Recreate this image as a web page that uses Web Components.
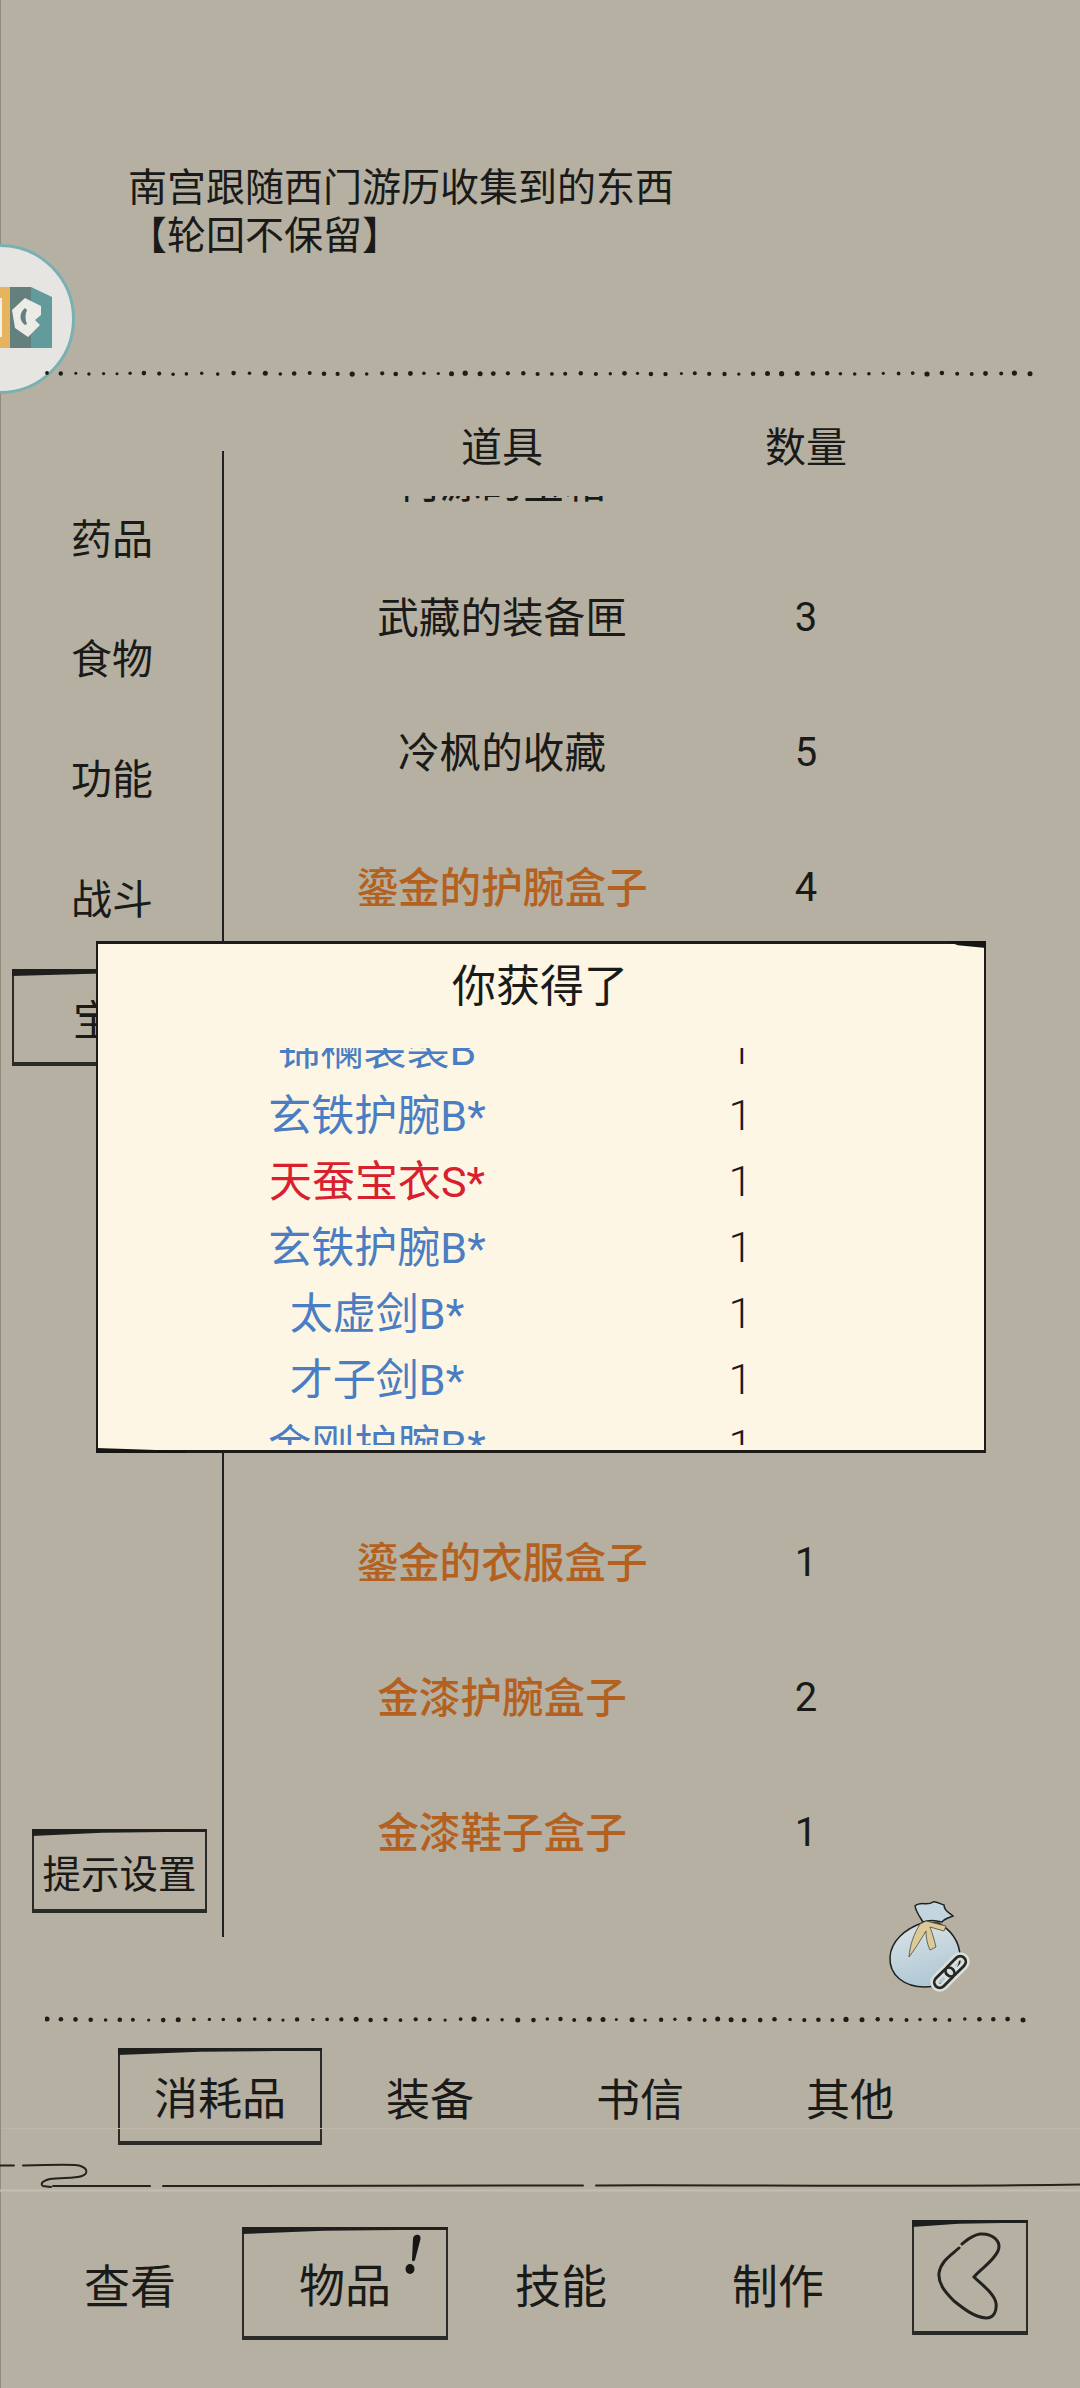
<!DOCTYPE html>
<html lang="zh">
<head>
<meta charset="utf-8">
<style>
html, body { margin: 0; padding: 0; }
body {
    width: 1080px;
    height: 2388px;
    overflow: hidden;
    background: #b5b0a1;
    color: #1a1a18;
    font-family: Roboto, "Noto Sans CJK SC", "Noto Sans", sans-serif;
}
</style>
</head>
<body>
<game-page>
    <intro-text>南宫跟随西门游历收集到的东西<br>【轮回不保留】</intro-text>
    <dot-rule seed="3"></dot-rule>
    <bag-panel></bag-panel>
    <dot-rule seed="7"></dot-rule>
    <tab-bar>
        <ink-box active>消耗品</ink-box>
        <ink-box>装备</ink-box>
        <ink-box>书信</ink-box>
        <ink-box>其他</ink-box>
    </tab-bar>
    <ink-rule></ink-rule>
    <main-nav></main-nav>
</game-page>
<float-badge></float-badge>
<reward-dialog></reward-dialog>

<script>
class GamePage extends HTMLElement {
    constructor() {
        super();
        this.attachShadow({mode: "open"});
        this.shadowRoot.innerHTML = `
<style>
:host { display: flex; flex-direction: column; width: 1080px; height: 2388px; border-left: 1px solid #8f8b7f; box-sizing: border-box; }
</style>
<slot></slot>`;
    }
}

class IntroText extends HTMLElement {
    constructor() {
        super();
        this.attachShadow({mode: "open"});
        this.shadowRoot.innerHTML = `
<style>
:host { display: block; height: 369px; box-sizing: border-box; padding: 164px 0 0 127px; font-size: 39px; line-height: 48px; }
</style>
<slot></slot>`;
    }
}

class DotRule extends HTMLElement {
    constructor() {
        super();
        this.attachShadow({mode: "open"});
        let seed = Number(this.getAttribute("seed")) || 1;
        let rand = () => {
            seed = (seed * 16807) % 2147483647;
            return seed / 2147483647;
        };
        let dots = "";
        for (let x = 2; x < 990; x += 13 + rand() * 3) {
            dots += `<circle cx="${x.toFixed(1)}" cy="${(4 + rand() * 1.2).toFixed(1)}" r="${(1.5 + rand() * 1.1).toFixed(1)}"/>`;
        }
        this.shadowRoot.innerHTML = `
<style>
:host { display: block; height: 8px; padding-left: 44px; position: relative; z-index: 1; }
svg { display: block; }
</style>
<svg width="992" height="8" fill="#1c1c1a">${dots}</svg>`;
    }
}

class BagPanel extends HTMLElement {
    constructor() {
        super();
        this.attachShadow({mode: "open"});
        let sideRows = ["药品", "食物", "功能", "战斗"].map(t => `<div class="side">${t}</div>`).join("");
        this.shadowRoot.innerHTML = `
<style>
:host { display: grid; grid-template-columns: 221px 2px 1fr; height: 1638px; position: relative; }
.left { display: flex; flex-direction: column; padding-top: 103px; }
.side { height: 120px; line-height: 120px; padding-left: 70px; font-size: 41px; flex: none; }
.current { margin: 10px 0 0 11px; width: 290px; height: 96px; justify-content: flex-start; padding-left: 59px; font-size: 41px; }
.tip { margin: auto 0 102px 31px; width: 175px; height: 83px; font-size: 38.5px; }
.line { background: #20201e; margin-top: 74px; height: 1486px; }
.right { display: flex; flex-direction: column; padding-top: 37px; }
.head, .row { display: grid; grid-template-columns: 518px 90px; margin-left: 19px; align-items: center; justify-items: center; }
.head { height: 50px; font-size: 41px; flex: none; }
.window { height: 1400px; overflow: hidden; margin-top: 32px; flex: none; }
.rows { margin-top: -84px; }
.row { height: 135px; font-size: 41.6px; }
.num { font-size: 40px; padding-top: 6px; }
.gold { color: #b4611f; font-weight: 500; }
svg.bag { position: absolute; left: 859px; top: 1502px; }
</style>
<div class="left">
    ${sideRows}
    <ink-box class="current" active>宝箱</ink-box>
    <ink-box class="tip" active>提示设置</ink-box>
</div>
<div class="line"></div>
<div class="right">
    <div class="head"><span>道具</span><span>数量</span></div>
    <div class="window"><div class="rows">
        <div class="row"><span>何源的宝箱</span><span class="num">5</span></div>
        <div class="row"><span>武藏的装备匣</span><span class="num">3</span></div>
        <div class="row"><span>冷枫的收藏</span><span class="num">5</span></div>
        <div class="row"><span class="gold">鎏金的护腕盒子</span><span class="num">4</span></div>
        <div class="row"></div><div class="row"></div><div class="row"></div><div class="row"></div>
        <div class="row"><span class="gold">鎏金的衣服盒子</span><span class="num">1</span></div>
        <div class="row"><span class="gold">金漆护腕盒子</span><span class="num">2</span></div>
        <div class="row"><span class="gold">金漆鞋子盒子</span><span class="num">1</span></div>
    </div></div>
</div>
<svg class="bag" width="120" height="120" viewBox="0 0 120 120">
    <defs><linearGradient id="g" x1="0.3" y1="0" x2="0.6" y2="1"><stop offset="0" stop-color="#d9e2e5"/><stop offset="1" stop-color="#adc6d4"/></linearGradient></defs>
    <path d="M62 44C45 50 31 62 30 78c-1 18 14 30 35 30 20 0 35-13 35-30 0-16-10-28-22-34z" fill="url(#g)" stroke="#1f2222" stroke-width="1.500"/>
    <path d="M63 43c-3-5-7-10-8-16 5-5 13 0 18-4 3-1 7 2 11 3 0 5 4 7 9 11-5 2-9 3-11 6-7-2-14-2-19 0z" fill="#c3d6df" stroke="#1f2222" stroke-width="1.500"/>
    <path d="M60 45C54 55 50 65 49 78c6-8 11-16 17-26 0 8 2 15 4 19l6-3c-2-8-4-15-6-20l14 4 2-5-20-5z" fill="#dccb98" stroke="#4a473a" stroke-width=".8"/>
    <g fill="none" transform="rotate(-45 90 93)">
        <rect x="70" y="87.500" width="24" height="11" rx="5.500" stroke="#dedfd8" stroke-width="8"/>
        <rect x="86" y="87.500" width="24" height="11" rx="5.500" stroke="#dedfd8" stroke-width="8"/>
        <rect x="70" y="87.500" width="24" height="11" rx="5.500" stroke="#23282a" stroke-width="2.800"/>
        <rect x="86" y="87.500" width="24" height="11" rx="5.500" stroke="#23282a" stroke-width="2.800"/>
    </g>
</svg>`;
    }
}

class InkBox extends HTMLElement {
    constructor() {
        super();
        this.attachShadow({mode: "open"});
        this.shadowRoot.innerHTML = `
<style>
:host { display: flex; align-items: center; justify-content: center; box-sizing: border-box; position: relative; }
:host([active]) { border: 2px solid #2a2a27; border-bottom-width: 4px; }
:host([active])::before {
    content: "";
    position: absolute;
    left: -2px;
    right: -2px;
    top: -3px;
    height: 7px;
    background: #1e1e1c;
    clip-path: polygon(0 0, 100% 0, 100% 35%, 40% 55%, 0 100%);
}
</style>
<slot></slot>`;
    }
}

class TabBar extends HTMLElement {
    constructor() {
        super();
        this.attachShadow({mode: "open"});
        this.shadowRoot.innerHTML = `
<style>
:host { display: grid; grid-template-columns: 207px repeat(3, 210px); height: 96px; margin-top: 26px; padding-left: 117px; font-size: 44px; position: relative; }
::slotted(ink-box) { height: 96px; }
::slotted(ink-box[active]) { margin-right: 3px; }
.fade { position: absolute; left: 0; right: 0; top: 79px; height: 1px; background: #bdb8aa; }
</style>
<slot></slot>
<div class="fade"></div>`;
    }
}

class InkRule extends HTMLElement {
    constructor() {
        super();
        this.attachShadow({mode: "open"});
        this.shadowRoot.innerHTML = `
<style>
:host { display: block; height: 32px; margin-top: 15px; }
svg { display: block; margin-left: -1px; }
</style>
<svg width="1081" height="32" fill="none" stroke="#22221f" stroke-linecap="round">
    <path d="M0 5.500h14" stroke-width="1.800"/>
    <path d="M23 5.500c18-.5 40-1 52-.5 12 1 15 8 7 11-8 3-22 1-32 3-8 2-10 5-7 7l8 1" stroke-width="2"/>
    <path d="M53 26h97M163 26c60 1 130 1 420-.5M596 25.500c100-1 300 2 484-1" stroke-width="2"/>
    <path d="M0 30.500h1081" stroke="#c2beb2" stroke-width="2"/>
</svg>`;
    }
}

class MainNav extends HTMLElement {
    constructor() {
        super();
        this.attachShadow({mode: "open"});
        this.shadowRoot.innerHTML = `
<style>
:host { display: flex; align-items: flex-start; padding: 36px 0 0 23px; font-size: 46px; position: relative; }
.item { width: 216px; height: 110px; flex: none; display: flex; align-items: center; justify-content: center; }
.item.first { width: 212px; }
.item.last { width: 218px; }
.box { width: 206px; height: 112px; margin: 0 5px 0 6px; padding-bottom: 2px; flex: none; }
.back { width: 116px; height: 114px; margin: -7px 0 0 25px; flex: none; }
.back svg { display: block; }
.alert { position: absolute; left: 400px; top: 42px; }
</style>
<div class="item first">查看</div>
<ink-box class="box" active>物品</ink-box>
<div class="item">技能</div>
<div class="item last">制作</div>
<ink-box class="back" active>
    <svg width="112" height="108" viewBox="0 0 112 108" fill="none" stroke="#22221f" stroke-width="3" stroke-linecap="round">
        <path d="M45 25C36 33 27 38 25 50c-1 10 5 18 15 28 10 8 20 16 32 17 8 0 11-7 10-15-2-10-14-18-22-26 6-8 18-14 24-26 4-10-6-18-18-17-8 1-13 6-18 10"/>
    </svg>
</ink-box>
<svg class="alert" width="26" height="42" viewBox="0 0 26 42" fill="#161614">
    <path d="M15 1c3-1 5 1 4.500 4L14 26c-.5 1.500-3 1.500-3 0l1-21c0-2 1-3.500 3-4z"/>
    <ellipse cx="9" cy="35" rx="4.500" ry="5"/>
</svg>`;
    }
}

class FloatBadge extends HTMLElement {
    constructor() {
        super();
        this.attachShadow({mode: "open"});
        this.shadowRoot.innerHTML = `
<style>
:host { display: block; position: absolute; left: -76px; top: 244px; width: 152px; height: 150px; }
svg { display: block; }
</style>
<svg width="152" height="150" viewBox="0 0 152 150">
    <circle cx="76" cy="75" r="73.500" fill="#e6e5e1" stroke="#79b0b3" stroke-width="3"/>
    <rect x="60" y="43" width="26" height="61" fill="#e6b45c"/>
    <rect x="60" y="54" width="18" height="39" fill="#f2efe6"/>
    <path d="M86 43h21v61H86z" fill="#63807f"/>
    <path d="M107 43l21 10v51h-21z" fill="#639a9c"/>
    <path d="M101 54l16 8v9l-6 5 5 5-12 12-13-9-3-18z" fill="#ecebe6"/>
    <path d="M101 64c-6 5-6 13 0 17l2-1c-2-4-2-10 0-14z" fill="#63807f"/>
</svg>`;
    }
}

class RewardDialog extends HTMLElement {
    constructor() {
        super();
        this.attachShadow({mode: "open"});
        let items = [
            ["锦襕袈裟B", "blue"], ["玄铁护腕B*", "blue"], ["天蚕宝衣S*", "red"], ["玄铁护腕B*", "blue"],
            ["太虚剑B*", "blue"], ["才子剑B*", "blue"], ["金刚护腕B*", "blue"]
        ];
        let rows = items.map(i => `<div class="row"><span class="${i[1]}">${i[0]}</span><span class="num">1</span></div>`).join("");
        this.shadowRoot.innerHTML = `
<style>
:host { display: flex; flex-direction: column; position: absolute; left: 96px; top: 941px; width: 890px; height: 512px; box-sizing: border-box; background: #fdf6e4; border: 2px solid #1c1c1a; border-top-width: 3px; border-bottom-width: 3px; }
:host::before, :host::after { content: ""; position: absolute; height: 7px; background: #151513; }
:host::before { right: -2px; top: -3px; width: 40px; clip-path: polygon(0 0, 100% 0, 100% 100%, 30% 60%); }
:host::after { left: -2px; bottom: -3px; width: 90px; clip-path: polygon(0 30%, 100% 70%, 100% 100%, 0 100%); }
.title { text-align: center; font-size: 44px; line-height: 60px; padding-top: 13px; height: 71px; flex: none; margin-left: -2px; box-sizing: border-box; }
.window { height: 397px; margin-top: 33px; overflow: hidden; flex: none; }
.rows { margin-top: -35px; }
.row { display: grid; grid-template-columns: 558px 176px; margin-left: 0; height: 66px; align-items: center; justify-items: center; font-size: 43px; }
.num { font-size: 43px; color: #1a1a18; font-weight: 300; margin-left: -7px; padding-top: 6px; }
.blue { color: #4a7dc2; }
.red { color: #d8202e; }
</style>
<div class="title">你获得了</div>
<div class="window"><div class="rows">${rows}</div></div>`;
    }
}

customElements.define("game-page", GamePage);
customElements.define("intro-text", IntroText);
customElements.define("dot-rule", DotRule);
customElements.define("ink-box", InkBox);
customElements.define("bag-panel", BagPanel);
customElements.define("tab-bar", TabBar);
customElements.define("ink-rule", InkRule);
customElements.define("main-nav", MainNav);
customElements.define("float-badge", FloatBadge);
customElements.define("reward-dialog", RewardDialog);
</script>
</body>
</html>
